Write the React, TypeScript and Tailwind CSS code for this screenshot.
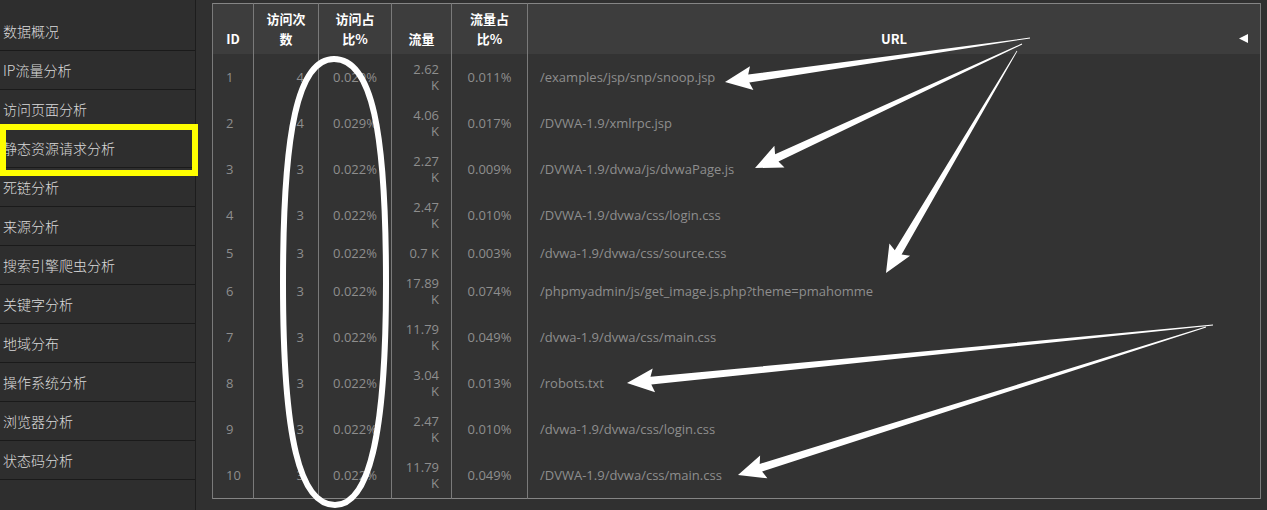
import React from "react";

const menu = [
  "数据概况",
  "IP流量分析",
  "访问页面分析",
  "静态资源请求分析",
  "死链分析",
  "来源分析",
  "搜索引擎爬虫分析",
  "关键字分析",
  "地域分布",
  "操作系统分析",
  "浏览器分析",
  "状态码分析",
];

const rows = [
  { id: 1, hits: 4, hitPct: "0.029%", flow: ["2.62", "K"], flowPct: "0.011%", url: "/examples/jsp/snp/snoop.jsp" },
  { id: 2, hits: 4, hitPct: "0.029%", flow: ["4.06", "K"], flowPct: "0.017%", url: "/DVWA-1.9/xmlrpc.jsp" },
  { id: 3, hits: 3, hitPct: "0.022%", flow: ["2.27", "K"], flowPct: "0.009%", url: "/DVWA-1.9/dvwa/js/dvwaPage.js" },
  { id: 4, hits: 3, hitPct: "0.022%", flow: ["2.47", "K"], flowPct: "0.010%", url: "/DVWA-1.9/dvwa/css/login.css" },
  { id: 5, hits: 3, hitPct: "0.022%", flow: ["0.7 K"], flowPct: "0.003%", url: "/dvwa-1.9/dvwa/css/source.css" },
  { id: 6, hits: 3, hitPct: "0.022%", flow: ["17.89", "K"], flowPct: "0.074%", url: "/phpmyadmin/js/get_image.js.php?theme=pmahomme" },
  { id: 7, hits: 3, hitPct: "0.022%", flow: ["11.79", "K"], flowPct: "0.049%", url: "/dvwa-1.9/dvwa/css/main.css" },
  { id: 8, hits: 3, hitPct: "0.022%", flow: ["3.04", "K"], flowPct: "0.013%", url: "/robots.txt" },
  { id: 9, hits: 3, hitPct: "0.022%", flow: ["2.47", "K"], flowPct: "0.010%", url: "/dvwa-1.9/dvwa/css/login.css" },
  { id: 10, hits: 3, hitPct: "0.022%", flow: ["11.79", "K"], flowPct: "0.049%", url: "/DVWA-1.9/dvwa/css/main.css" },
];

// tapered annotation arrow, thin at the start and wide at the head
function arrowPoints(sx: number, sy: number, tx: number, ty: number, shaft = 8, head = 24, headLen = 24) {
  const dx = tx - sx;
  const dy = ty - sy;
  const len = Math.hypot(dx, dy);
  const ux = dx / len;
  const uy = dy / len;
  const nx = -uy;
  const ny = ux;
  const bx = tx - ux * headLen;
  const by = ty - uy * headLen;
  const wx = bx - ux * 3;
  const wy = by - uy * 3;
  const pts = [
    [sx + nx * 0.4, sy + ny * 0.4],
    [bx + (nx * shaft) / 2, by + (ny * shaft) / 2],
    [wx + (nx * head) / 2, wy + (ny * head) / 2],
    [tx, ty],
    [wx - (nx * head) / 2, wy - (ny * head) / 2],
    [bx - (nx * shaft) / 2, by - (ny * shaft) / 2],
    [sx - nx * 0.4, sy - ny * 0.4],
  ];
  return pts.map((p) => `${p[0].toFixed(1)},${p[1].toFixed(1)}`).join(" ");
}

const arrows = [
  [1030, 38, 725, 82],
  [1022, 44, 755, 168],
  [1017, 51, 886, 273],
  [1213, 325, 627, 383],
  [1206, 327, 738, 475],
];

export default function App() {
  return (
    <div className="relative flex w-[1267px] h-[510px] overflow-hidden bg-[#303030] font-['Open_Sans','Noto_Sans_CJK_SC',sans-serif]">
      {/* Sidebar */}
      <aside className="w-[196px] h-full shrink-0 bg-[#2e2e2e] border-r border-[#1d1d1d] pt-[12px]">
        {menu.map((item) => (
          <div
            key={item}
            className="flex h-[39px] items-center border-b border-[#1a1a1a] pl-[3px] text-[14px] font-light text-[#dadada] font-['Noto_Sans_CJK_SC',sans-serif]"
          >
            {item}
          </div>
        ))}
      </aside>

      {/* Table */}
      <main className="pl-[16px] pt-[3px]">
        <table className="w-[1049px] table-fixed border-collapse border border-[#858585] text-[13px]">
          <colgroup>
            <col className="w-[41px]" />
            <col className="w-[65px]" />
            <col className="w-[73px]" />
            <col className="w-[60px]" />
            <col className="w-[76px]" />
            <col />
          </colgroup>
          <thead>
            <tr className="bg-[#3d3d3d] text-white font-bold leading-[20px] font-['Noto_Sans_CJK_SC',sans-serif]">
              <th className="border-x border-[#7a7a7a] pt-[5px] pb-[5px] align-bottom text-center">ID</th>
              <th className="border-x border-[#7a7a7a] pt-[5px] pb-[5px] align-bottom text-center">
                访问次<br />数
              </th>
              <th className="border-x border-[#7a7a7a] pt-[5px] pb-[5px] align-bottom text-center">
                访问占<br />比%
              </th>
              <th className="border-x border-[#7a7a7a] pt-[5px] pb-[5px] align-bottom text-center">流量</th>
              <th className="border-x border-[#7a7a7a] pt-[5px] pb-[5px] align-bottom text-center">
                流量占<br />比%
              </th>
              <th className="relative border-x border-[#7a7a7a] pt-[5px] pb-[5px] align-bottom text-center">
                URL
                <svg className="absolute right-[12px] bottom-[11px]" width="9" height="9" viewBox="0 0 9 9">
                  <polygon points="0,4.5 9,0 9,9" fill="#fff" />
                </svg>
              </th>
            </tr>
          </thead>
          <tbody className="bg-[#333333] text-[#8e8e8e] leading-[16px]">
            {rows.map((r) => (
              <tr key={r.id}>
                <td className="border-x border-[#7a7a7a] py-[7px] pl-[13px] align-middle">{r.id}</td>
                <td className="border-x border-[#7a7a7a] py-[7px] pr-[14px] text-right align-middle">{r.hits}</td>
                <td className="border-x border-[#7a7a7a] py-[7px] text-center align-middle">{r.hitPct}</td>
                <td className="border-x border-[#7a7a7a] py-[7px] pr-[12px] text-right align-middle">
                  {r.flow.map((f, i) => (
                    <div key={i}>{f}</div>
                  ))}
                </td>
                <td className="border-x border-[#7a7a7a] py-[7px] text-center align-middle">{r.flowPct}</td>
                <td className="border-x border-[#7a7a7a] py-[7px] pl-[12px] align-middle">{r.url}</td>
              </tr>
            ))}
          </tbody>
        </table>
      </main>

      {/* Yellow highlight box */}
      <div className="absolute left-0 top-[124px] w-[198px] h-[52px] border-[6px] border-[#ffff00]" />

      {/* White annotations */}
      <svg className="absolute inset-0 pointer-events-none" width="1267" height="510" viewBox="0 0 1267 510">
        <path
          d="M334 59 C372 59 386 130 386 283 C386 440 368 505 335 505 C300 505 283 440 283 283 C283 130 298 59 334 59 Z"
          fill="none"
          stroke="#fff"
          strokeWidth="6"
        />
        {arrows.map((a, i) => (
          <polygon key={i} points={arrowPoints(a[0], a[1], a[2], a[3])} fill="#fff" />
        ))}
      </svg>
    </div>
  );
}
